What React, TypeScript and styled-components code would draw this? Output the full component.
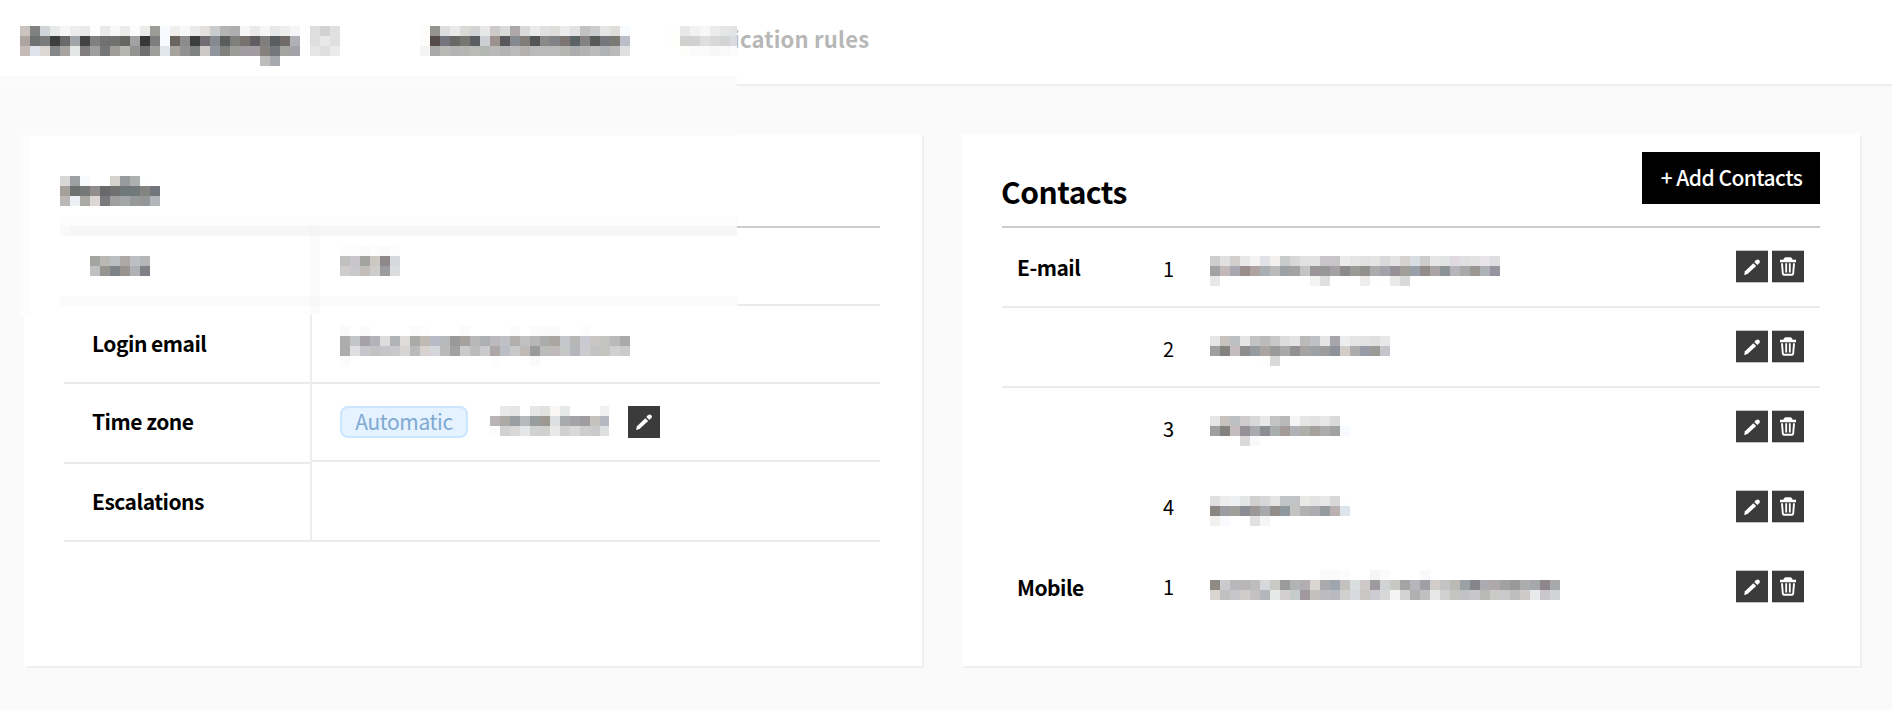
import React from "react";
import styled, { createGlobalStyle } from "styled-components";

const GlobalStyle = createGlobalStyle`
  *, *::before, *::after { box-sizing: border-box; }
  body {
    margin: 0;
    background: #fafafa;
    color: #000;
    font-family: "Noto Sans CJK SC", "Noto Sans", sans-serif;
    font-size: 20px;
    line-height: 32px;
  }
`;

const CELL = 10;

const Blocks = styled.svg`
  display: block;
  flex: none;
`;

/* Pixelated private text: one string per row, one colour per 10px block, "." for an empty block. */
function Mosaic({ rows, width, label }: { rows: string[]; width?: number; label: string }) {
  const cells = rows.map((r) => r.trim().split(/\s+/));
  const w = width ?? Math.max(...cells.map((r) => r.length)) * CELL;
  return (
    <Blocks width={w} height={rows.length * CELL} shapeRendering="crispEdges" role="img" aria-label={label}>
      {cells.map((row, y) =>
        row.map((c, x) =>
          c === "." ? null : (
            <rect key={`${x}-${y}`} x={x * CELL} y={y * CELL} width={CELL} height={CELL} fill={`#${c}`} />
          )
        )
      )}
    </Blocks>
  );
}

const heading = [
  "cac3c0 808281 d1d5da e8eae9 f6f6f6 eeeded e9e9e9 fdfdfd e8eae9 f6f7f6 ebebea fcfcfc ebebea 9b9b97 f7fbff f0efed f6f8f7 e9eae9 e4e0dd c8ccce b4b4b4 aeaeb0 f5f5f5 eaeaea f6f6f6 e6e7e9 eeeeec f5f6f8",
  "afa5a0 707173 7b7b7b 3c3d3d 69686a a1a4a8 434345 81807e 707070 70706e 666662 a0a2a4 393637 7c7e7d f7fbff 6a645f 8d8b8b 3c3e3c 716e73 888a91 5a5d5d 807e7b 787170 605d62 807e7f 5a5d5f 706a68 afb1b7",
  "c4bbb9 dfe3eb dcd7d3 84878a a7a39e e5e7e6 817c7d 9e9e9e 747678 a09c98 b6b6b1 939391 716f70 9e9e9c e1e7ec a6a39c 929293 808281 cbcac9 91959b 80807c 9b9b99 a19ca2 a39da1 86817d 76777d a4a4a2 a2a3a8",
  ". . . . . . . . . . . . . . . . . . . . . . . . bfbdbc a8a9ae . .",
];
const headingMark = ["dedede d2d2d2 e0e0e0", "dedede e9e9e9 e0e0e0", "e6e6e6 dedede ebebeb"];
const activeTab = [
  "fefdfb 949390 dcdddf e9ebea dad9d5 d2d3d5 e6e8e7 cdc9c8 dadad9 aea9a8 d9d9dc e9ebed e0e0e0 deddda ebebeb e1e1e1 c2c2c2 cbcccd e5e5e5 dfdeda f7fafe",
  "fefcf8 544b4a 74757c 686967 757571 5a5e60 cdd0d3 9d918d 59585a 858990 807d79 525657 898a88 808287 7d7573 5b6366 838182 585a58 75777d 7a7972 b9bec9",
  "f4f4f4 a8a8a8 b8b8b6 b3b3b3 b5b5b3 babab7 b5b7b5 bababa b3b3b3 bababa b4b2af bababa b9bab9 b9bab9 b5b5b2 acadaf b2b2b2 bababa b1b2b4 bababa e0e0e2",
];
const mutedTab = [
  "fefefc e8e8e8 f2f2f2 f7f7f7 ececec e4e6e5 e2e3e4",
  "fefefb d1d1cf d2d2d3 dedede d8d8d8 d2d4d6 dadbde",
  ". fdfdfc fafbfb fbfbfb f7f7f7 f9f9f9 fbfbfb",
];
const profileTitle = [
  "d8d7d5 9e9fa2 f7f9fc . . d6d2cc 989a9b afb1b0 fdfefe .",
  "a4a09a 6e716f 777978 918d8d 69686a 707071 717879 717979 838380 71757c",
  "bcb8b5 ecf0f4 aaa9a5 dcd7d4 7a797b 9e9fa1 a3a7a8 979899 959697 b3b7bb",
];
const nameLabel = ["a3a5a1 bab8b4 bcbfc1 aea9a6 bebfc2 b5b6b8", "bfc0c2 979590 7d8387 9a938f afb1b5 808186"];
const nameValue = [
  "fdfdfd fdfdfd fbfbfb fdfdfd fafafa fdfdfd",
  "c0c0be cac5cc a3a3a2 ccc9c3 8e888a d5d8dd",
  "d0cccb c9c9cc c3beba cecdcb 9b9c9d dcdddf",
];
const loginValue = [
  "fafafa . fafafa . . . . fbfbfb fdfdfd . . . fbfbfb . . . . fbfbfb . fbfbfb fafafa fafafa . . fcfcfc . . . .",
  "adadac c3c6c7 a5a1a9 b3b4bb dddddd b2b3b6 dedddb aaaaa8 c0bab4 b7bac4 b8b9bc 999999 a5a19d b7b7b7 afb0b2 bdbabd c0c1c5 b2b0af c0c0c0 b6b6b6 acacac aca6a0 c3c6ca b7b7b7 c9cad1 c8c5c4 c3c3c1 bababa a9abaa",
  "adadac dfdfe1 c7c6cc c3c1c1 c6c6c9 cac8ca d6d5d3 bababa d8d2cf d5d6dc bababa a1a0a3 cacaca bcbcbc cbcbcd afa6a7 bbbec4 c9c9c9 bfbab5 999b9b bcbcba c0bbba c5c6c6 b4b6bc cbcbd0 c3c3c4 c3c3c0 d0d0d0 cacbcd",
  "fcfcfc . . . . . . . . . . . . . . fdfdfd . . . fafafa . . . . . . . . .",
];
const zoneValue = [
  ". e7e9e8 e6e6e6 . e5e7e6 e1e1df f9f8f6 e7e9e8 . . . f0f0f0",
  "bbb4b7 adaaa5 9a9fa3 b8b9ba 989d9d 9d9992 dddee0 a9aaab a3a3a8 a09da1 c4c2bd b5b6c0",
  "fcfcfc d2d2d2 d8d8d8 e5e6e8 d1d1d1 d0d0d0 ebe9e7 d1d1d1 d9d9d9 cdcdce cacaca dedfe1",
];
const mail1 = [
  "cdcdcd e0e0e0 d0cfcd e8e8e8 f4f2f3 e0e2e5 f2f1ef c9cccb d8d8d8 e1e1e1 e1e1e1 c7c5c7 c7c5c7 ebebeb e4e4e4 e2e2e2 e4e4e2 d9d9dc e3e3e3 d3d2ce d7dde0 cecdcb e6e6e6 e2e4e4 dfdadf e0e0e2 e2e2e2 e7e5e7 dedfe1",
  "a2a1a4 c3b8b8 a8a9b0 998e8c aea3a1 aaafb3 bababa 9ca1a4 a3a3a1 c4c4c2 9b959a 979797 a3a1a3 8b898a 9a9a97 91908c aaabac a1a2aa 969196 a09e99 9aa0aa 918c8a aaa5a4 8d9497 b7b3bb a9a9aa 9b9792 acb2b5 9793a0",
  "e7e7e9 . . . . . . . . . f4f3f1 e0e0e2 . . . eeedeb fdfefe . e9e9e7 d8dad9",
];
const mail2 = [
  "e5e5e5 c7c2be bdbfc1 e5e5e5 c3c3c3 bcbabb c8c8c8 dcdcdc e3e3e3 bcbab9 bfc1c7 e5e5e5 a8a6aa ebedef e5e5e5 e3e3e3 dfdfdf e7e9e8",
  "9f9f9f 83827f c4bcbf 8f8d8f 969c9f aaa5a1 9a9a9a a9a9a9 929092 a5a4a1 9ea2a5 9b9d9f 8f919b d2cdc8 aeacaf 999ca6 9c9b97 c6c5cc",
  ". . . . . fefefc d9d9d9",
];
const mail3 = [
  "e5e5e5 c7c2be bdbfc1 cecbcd d9d9d9 e7e9e8 c4c4c4 b9b9b9 f5f5f5 e5e5e3 e2e2e2 e7e7e7 dadada",
  "9f9f9f 83827f c4bcbd 949296 a9aaad 8d8e93 a9adad a59b98 b1b2b7 aeaeab a5a19d acacad a1a3a2 f7fbff",
  ". . . dbd9da f9f9fc",
];
const mail4 = [
  "e0dee0 ededed eeeff1 e4e6e5 d2d0ce d7d7d9 e4e4e4 c1c4c5 c2c3c5 e9e9e6 e3e3e3 e8e8e8 d8d8d8 fdfefe",
  "8b8582 9b9ca4 a09f9b 8b8c94 9c989a a8a9ac 918d8a 8f979f c3c3c1 b1b1b1 abadb0 969b9d bbb1b1 dde4ec",
  "f1f0ee f9fafd . . e1e1df f4f6f5",
];
const phone = [
  ". . . . . . . . . . . fafafa fafafa fcfcfc . . f6f6f6 fafbfa . . . f9f9f9",
  "8f8a84 cbcbcd bab7ba b9b6b8 bdbdbd d6dadd c9cac6 9b9b9b b1b3b4 b2adb0 dad6d2 a9abac a0a6af c3c2be dadedf cecac9 9e9b9f d1d4d6 c9c8c4 a4a4a2 b5b6bb a09fa5 d2cdca c1c4c3 bab9b3 9aa2a5 85868a adabaf aea8a8 a1a1a1 999999 acadaf a6a7aa 8e868b a8a9aa",
  "d9d5d0 c0c0c0 c5c5ca cfcdcc c3c1c3 b5b6bc e6e8e7 d3cecf c6cccb a1999e c3c1be bcbcbf b9bac0 d0d0ce d9dae0 cac7c5 ccccd2 d8d8d8 f4f4f4 d2d2d2 b0b0b0 c0c0c2 e7e7e7 d1d1d1 c4c4c1 c1c2c4 c7c7c9 b9b9b7 cccac9 c9c9cb bebebe cecac9 e8eaeb c9c7c9 d2d3d4",
];

const Page = styled.div`
  position: relative;
  width: 1892px;
  height: 710px;
  overflow: hidden;
`;

const Header = styled.header`
  display: flex;
  align-items: flex-start;
  height: 86px;
  padding: 26px 20px 0;
  background: #fff;
  border-bottom: 2px solid #ededed;
`;

const Mark = styled.div`
  margin: 0 80px 0 10px;
`;

const Tabs = styled.nav`
  display: flex;
  gap: 40px;
`;

const Tab = styled.div`
  display: flex;
  color: #b7b7b7;
  font-size: 22px;
  font-weight: 700;
  white-space: nowrap;

  > svg {
    z-index: 1;
  }
`;

const TabText = styled.span`
  margin: -4px 0 0 -4px;
  letter-spacing: 0.2px;
`;

const Main = styled.main`
  display: flex;
  gap: 40px;
  padding: 48px 32px 0 24px;
`;

const Card = styled.section<{ $right: number }>`
  width: 898px;
  height: 532px;
  padding: 0 ${(p) => p.$right}px 0 40px;
  background: #fff;
  box-shadow: 2px 2px 0 #f0f0f0;
`;

const CardHead = styled.div`
  display: flex;
  justify-content: space-between;
  height: 94px;
  border-bottom: 2px solid #ccc;
`;

const HiddenTitle = styled.div`
  margin: 42px 0 0 -4px;
`;

const Title = styled.h2`
  margin: 37px 0 0 -1px;
  font-size: 30px;
  font-weight: 700;
  letter-spacing: -0.5px;
  line-height: 40px;
`;

const AddButton = styled.button`
  width: 178px;
  height: 52px;
  margin-top: 18px;
  padding: 0 0 1px 1px;
  border: 0;
  background: #000;
  color: #fff;
  font: 500 21px/51px "Noto Sans CJK SC", "Noto Sans", sans-serif;
  letter-spacing: -0.55px;
  white-space: nowrap;
`;

const ProfileGrid = styled.div`
  display: grid;
  grid-template-columns: 248px 1fr;
`;

const Labels = styled.div`
  border-right: 2px solid #ededed;
`;

const ProfileCell = styled.div<{ $h?: number; $pad?: number }>`
  display: flex;
  align-items: flex-start;
  height: ${(p) => p.$h ?? 78}px;
  padding: ${(p) => p.$pad ?? 21}px 0 0 28px;
  border-bottom: 2px solid #ebebeb;
  font-size: 21px;
  font-weight: 700;
  letter-spacing: -0.5px;
  white-space: nowrap;
`;

const HiddenLabel = styled.div`
  margin-left: -2px;
`;

const Pill = styled.span`
  width: 128px;
  height: 32px;
  margin-right: 22px;
  border: 2px solid #cce6ff;
  border-radius: 8px;
  background: #e5f2ff;
  color: #80a9d2;
  font-weight: 400;
  letter-spacing: -0.4px;
  line-height: 27px;
  text-align: center;
`;

const ContactRow = styled.div<{ $line?: boolean }>`
  display: grid;
  grid-template-columns: 146px 47px 1fr auto;
  align-items: start;
  height: 80px;
  padding: 0 16px 0 15px;
  border-bottom: 2px solid ${(p) => (p.$line ? "#ebebeb" : "transparent")};
`;

const Kind = styled.div`
  padding-top: 23px;
  font-size: 21px;
  font-weight: 700;
  letter-spacing: -0.5px;
`;

const Index = styled.div<{ $top: number }>`
  padding-top: ${(p) => p.$top}px;
`;

const Value = styled.div<{ $top: number }>`
  padding-top: ${(p) => p.$top}px;
`;

const Actions = styled.div`
  display: flex;
  gap: 4px;
  padding-top: 22px;
`;

const IconButton = styled.button<{ $soft?: boolean }>`
  display: grid;
  place-items: center;
  width: 32px;
  height: ${(p) => (p.$soft ? 33 : 32)}px;
  padding: 0;
  border: solid #c3c3c3;
  border-width: ${(p) => (p.$soft ? "1px 0" : "0")};
  background: #3b3b3b;
`;

const ZoneEdit = styled.div`
  margin-left: 19px;
`;

const BlurEdges = styled.svg`
  position: absolute;
  top: 0;
  left: 0;
  pointer-events: none;
`;

function Pencil() {
  return (
    <svg width="18" height="18" viewBox="0 0 18 18" fill="#fff" aria-hidden="true">
      <path d="M1.1 17.1 2 13.2 10.3 5.3 13.2 8 5 15.5Q3.2 16.9 1.1 17.1Z" />
      <path d="M11.3 4.1 13 2.2Q14.6.9 16.2 2.1 17.6 3.5 16.5 5L14.3 7Z" />
    </svg>
  );
}

function Trash() {
  return (
    <svg width="16" height="19" viewBox="0 0 16 19" aria-hidden="true">
      <path d="M0 5.2V2.8h3.2L4.5.8Q4.9.2 5.6.2h4.8q.7 0 1.1.6l1.3 2H16v2.4Z" fill="#fff" />
      <path d="M2 6.2 2.8 16.5Q2.9 17.8 4.2 17.8h7.6q1.3 0 1.4-1.3L14 6.2" fill="none" stroke="#fff" strokeWidth="1.9" />
      <path d="M6.2 6.3v9.2M9.8 6.3v9.2" stroke="#fff" strokeWidth="1.8" />
    </svg>
  );
}

const contacts = [
  { kind: "E-mail", index: 1, rows: mail1, top: 28, indexTop: 25, line: true },
  { kind: "", index: 2, rows: mail2, top: 28, indexTop: 25, line: true },
  { kind: "", index: 3, rows: mail3, top: 28, indexTop: 25, line: false },
  { kind: "", index: 4, rows: mail4, top: 28, indexTop: 23, line: false },
  { kind: "Mobile", index: 1, rows: phone, top: 22, indexTop: 23, line: false },
];

/* Softened outlines of the header, card and table inside the pixelated corner. */
function PixelatedCorner() {
  return (
    <BlurEdges width="737" height="315" shapeRendering="crispEdges" aria-hidden="true">
      <rect y="76" width="737" height="9" fill="#fbfbfb" />
      <rect y="85" width="737" height="51" fill="#fafafa" />
      <rect x="20" y="126" width="717" height="10" fill="#fbfbfb" />
      <rect y="136" width="20" height="179" fill="#fafafa" />
      <rect x="20" y="136" width="10" height="179" fill="#fdfdfd" />
      <rect x="60" y="216" width="677" height="10" fill="#fcfcfc" />
      <rect x="60" y="226" width="677" height="10" fill="#f9f9f9" />
      <rect x="70" y="226" width="667" height="10" fill="#f6f6f6" />
      <rect x="310" y="226" width="10" height="10" fill="#f4f4f4" />
      <rect x="310" y="236" width="10" height="79" fill="#fbfbfb" />
      <rect x="60" y="296" width="677" height="10" fill="#fbfbfb" />
      <rect x="310" y="296" width="10" height="10" fill="#f8f8f8" />
    </BlurEdges>
  );
}

export default function App() {
  return (
    <>
      <GlobalStyle />
      <Page>
        <Header>
          <Mosaic rows={heading} label="Hidden heading" />
          <Mark>
            <Mosaic rows={headingMark} label="Hidden mark" />
          </Mark>
          <Tabs>
            <Tab>
              <Mosaic rows={activeTab} label="Hidden tab" />
            </Tab>
            <Tab>
              <Mosaic rows={mutedTab} width={67} label="Hidden tab" />
              <TabText>ication rules</TabText>
            </Tab>
          </Tabs>
        </Header>
        <Main>
          <Card $right={42}>
            <CardHead>
              <HiddenTitle>
                <Mosaic rows={profileTitle} label="Hidden title" />
              </HiddenTitle>
            </CardHead>
            <ProfileGrid>
              <Labels>
                <ProfileCell $pad={28}>
                  <HiddenLabel>
                    <Mosaic rows={nameLabel} label="Hidden label" />
                  </HiddenLabel>
                </ProfileCell>
                <ProfileCell>Login email</ProfileCell>
                <ProfileCell $h={80}>Time zone</ProfileCell>
                <ProfileCell>Escalations</ProfileCell>
              </Labels>
              <div>
                <ProfileCell $pad={18}>
                  <Mosaic rows={nameValue} label="Hidden value" />
                </ProfileCell>
                <ProfileCell $pad={20}>
                  <Mosaic rows={loginValue} label="Hidden value" />
                </ProfileCell>
                <ProfileCell $pad={22}>
                  <Pill>Automatic</Pill>
                  <Mosaic rows={zoneValue} width={119} label="Hidden value" />
                  <ZoneEdit>
                    <IconButton aria-label="Edit time zone">
                      <Pencil />
                    </IconButton>
                  </ZoneEdit>
                </ProfileCell>
                <ProfileCell $h={80} />
              </div>
            </ProfileGrid>
          </Card>
          <Card $right={40}>
            <CardHead>
              <Title>Contacts</Title>
              <AddButton>+ Add Contacts</AddButton>
            </CardHead>
            {contacts.map((c, i) => (
              <ContactRow key={i} $line={c.line}>
                <Kind>{c.kind}</Kind>
                <Index $top={c.indexTop}>{c.index}</Index>
                <Value $top={c.top}>
                  <Mosaic rows={c.rows} label="Hidden contact" />
                </Value>
                <Actions>
                  <IconButton $soft aria-label="Edit">
                    <Pencil />
                  </IconButton>
                  <IconButton $soft aria-label="Delete">
                    <Trash />
                  </IconButton>
                </Actions>
              </ContactRow>
            ))}
          </Card>
        </Main>
        <PixelatedCorner />
      </Page>
    </>
  );
}
